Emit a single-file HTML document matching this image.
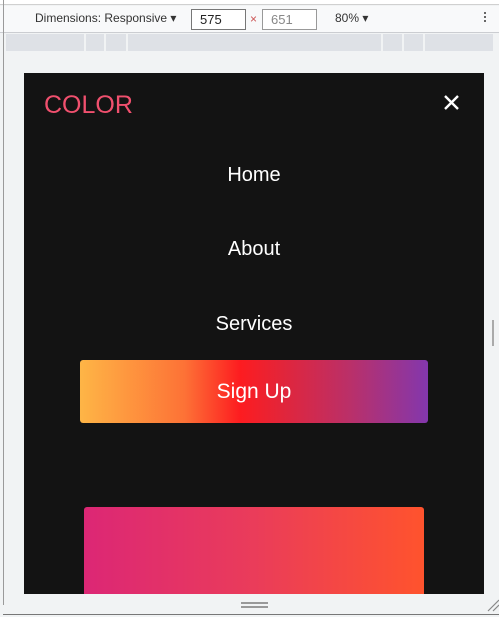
<!DOCTYPE html>
<html><head><style>
*{margin:0;padding:0;box-sizing:border-box}
body{width:499px;height:617px;background:#f1f3f4;position:relative;overflow:hidden;font-family:"Liberation Sans",Arial,sans-serif}
.a{position:absolute}
</style></head><body>
<div class="a" style="left:0;top:0;width:499px;height:5px;background:#fff;border-bottom:1px solid #d0d0d0"></div>
<div class="a" style="left:0;top:6px;width:499px;height:27px;background:#f8f9fa;border-bottom:1px solid #cbcdd1"></div>
<div class="a" style="left:3px;top:0;width:1px;height:605px;background:#9a9a9a"></div>
<div class="a" style="left:35px;top:11px;font-size:12px;color:#333">Dimensions: Responsive ▾</div>
<div class="a" style="left:191px;top:9px;width:55px;height:21px;border:1px solid #777;background:#fff;font-size:13px;padding:2px 8px;color:#222">575</div>
<div class="a" style="left:250px;top:12px;font-size:12px;color:#c55">×</div>
<div class="a" style="left:262px;top:9px;width:55px;height:21px;border:1px solid #999;background:#fff;font-size:13px;padding:2px 8px;color:#888">651</div>
<div class="a" style="left:335px;top:11px;font-size:12px;color:#333">80% ▾</div>
<div class="a" style="left:484px;top:12px;width:2px;height:2px;background:#666;box-shadow:0 4px #666,0 8px #666"></div>
<div class="a" style="left:6px;top:34px;width:487px;height:17px;background:#dee1e6"></div>
<div class="a" style="left:84px;top:34px;width:2px;height:17px;background:#f1f3f4"></div>
<div class="a" style="left:104px;top:34px;width:2px;height:17px;background:#f1f3f4"></div>
<div class="a" style="left:126px;top:34px;width:2px;height:17px;background:#f1f3f4"></div>
<div class="a" style="left:381px;top:34px;width:2px;height:17px;background:#f1f3f4"></div>
<div class="a" style="left:402px;top:34px;width:2px;height:17px;background:#f1f3f4"></div>
<div class="a" style="left:423px;top:34px;width:2px;height:17px;background:#f1f3f4"></div>
<div class="a" style="left:24px;top:73px;width:460px;height:521px;background:#131313;overflow:hidden">
 <div class="a" style="left:20px;top:18px;font-size:25px;color:#f0506e">COLOR</div>
 <svg class="a" style="left:419px;top:21px" width="17" height="17"><path d="M2 2L15 15M15 2L2 15" stroke="#fff" stroke-width="2.4"/></svg>
 <div class="a" style="left:0;width:460px;top:91px;text-align:center;color:#fff;font-size:20px">Home</div>
 <div class="a" style="left:0;width:460px;top:165px;text-align:center;color:#fff;font-size:20px">About</div>
 <div class="a" style="left:0;width:460px;top:240px;text-align:center;color:#fff;font-size:20px">Services</div>
 <div class="a" style="left:56px;top:287px;width:348px;height:63px;border-radius:3px;background:linear-gradient(90deg,#feb546,#fd7236 30%,#fd1c20 46%,#e2253a 58%,#b9306a 78%,#8337ad);color:#fff;font-size:21px;text-align:center;line-height:63px">Sign Up</div>
 <div class="a" style="left:60px;top:434px;width:340px;height:100px;border-radius:3px;background:linear-gradient(90deg,#dc2775,#ea3c5a 50%,#ff532d)"></div>
</div>
<div class="a" style="left:241px;top:602px;width:27px;height:2px;background:#999;box-shadow:0 4px #999"></div>
<div class="a" style="left:3px;top:614px;width:496px;height:1px;background:#777"></div>
<div class="a" style="left:492px;top:320px;width:2px;height:26px;background:#aaa"></div>
<svg class="a" style="left:487px;top:598px" width="12" height="14"><path d="M1 13L12 2M6 13L12 7" stroke="#888" stroke-width="1.2"/></svg>
</body></html>
